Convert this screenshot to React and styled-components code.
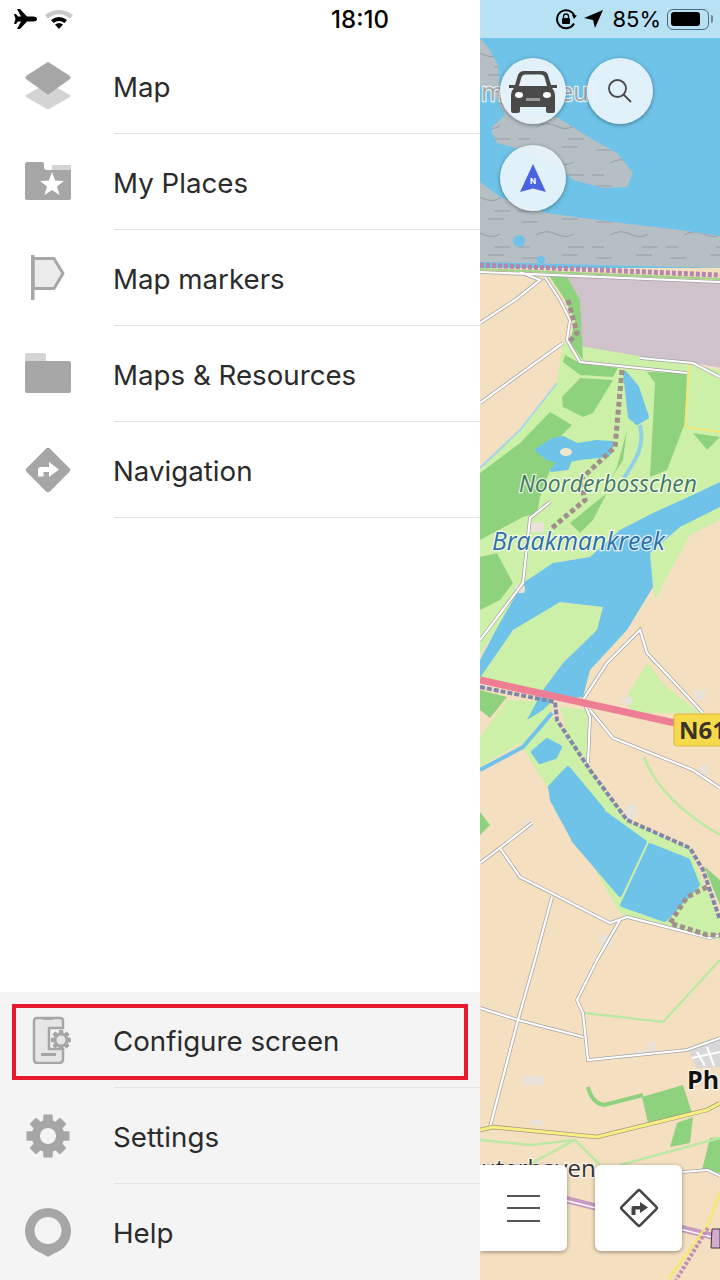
import React from 'react'
import styled, { createGlobalStyle } from 'styled-components'

const GlobalStyle = createGlobalStyle`
    html, body { margin: 0; padding: 0; background: #fff; }
    body { font-family: Inter, "Liberation Sans", sans-serif; }
`;

const GREY = '#a6a6a6'

function LayersIcon() {
    return (
        <svg width="46" height="48" viewBox="0 0 46 48">
            <path d="M23 21 L45 33 Q46 34 45 35 L24 47 Q23 47.5 22 47 L1 35 Q0 34 1 33 Z" fill="#d4d4d4" />
            <path d="M23 0 Q23.6 0 24 .4 L45 14 Q46 15.500 45 17 L24 32 Q23 32.500 22 32 L1 17 Q0 15.500 1 14 L22 .4 Q22.400 0 23 0 Z" fill={GREY} />
        </svg>
    )
}

function StarFolderIcon() {
    return (
        <svg width="46" height="40" viewBox="0 0 46 40">
            <path d="M27 3 H46 V10 H27 Z" fill="#d4d4d4" />
            <path d="M2 0 H17 Q19 0 19 2 V5 Q19 8 22 8 H46 V36 Q46 38 44 38 H2 Q0 38 0 36 V2 Q0 0 2 0 Z" fill={GREY} />
            <path d="M27 10 L30.200 18.500 L39 19 L32 24.500 L34.500 33 L27 28 L19.500 33 L22 24.500 L15 19 L23.800 18.500 Z" fill="#fff" />
        </svg>
    )
}

function FlagIcon() {
    return (
        <svg width="46" height="46" viewBox="0 0 46 46">
            <path d="M8 3.500 H29 L38 18.500 L29 33.500 H8 Z" fill="#ebebeb" stroke={GREY} strokeWidth="3" strokeLinejoin="round" />
            <rect x="6" y="0" width="3.500" height="45" fill={GREY} />
        </svg>
    )
}

function FolderIcon() {
    return (
        <svg width="46" height="42" viewBox="0 0 46 42">
            <path d="M2 0 H19 Q21 0 21 2 V12 H0 V2 Q0 0 2 0 Z" fill="#d4d4d4" />
            <path d="M2 8 H44 Q46 8 46 10 V38 Q46 40 44 40 H2 Q0 40 0 38 V10 Q0 8 2 8 Z" fill={GREY} />
        </svg>
    )
}

function TurnDiamondIcon() {
    return (
        <svg width="46" height="46" viewBox="0 0 46 46">
            <rect x="6.500" y="6.500" width="33" height="33" rx="3" transform="rotate(45 23 23)" fill={GREY} />
            <path d="M13 29.500 V23 Q13 20 16 20 H24 V15 L34 22.500 L24 30 V25 H18.500 V29.500 Z" fill="#fff" />
        </svg>
    )
}

function PhoneGearIcon() {
    return (
        <svg width="46" height="48" viewBox="0 0 46 48">
            <path d="M24 12 V33 H38 V43 Q38 47 34 47 H12 Q9 47 9 43 V5 Q9 2 12 2 H35 Q38 2 38 5 V12 Z" fill="#e6e6e6" stroke={GREY} strokeWidth="2.500" />
            <rect x="18" y="2" width="10" height="2" fill={GREY} />
            <rect x="16" y="37" width="15" height="3" fill={GREY} />
            <Gear cx={36} cy={24} r={10} hole={4.500} fill={GREY} holeFill="#e6e6e6" />
        </svg>
    )
}

function Gear({ cx, cy, r, hole, fill, holeFill }) {
    const teeth = [0, 45, 90, 135, 180, 225, 270, 315]
    const w = r * 0.44
    return (
        <g>
            <circle cx={cx} cy={cy} r={r * 0.76} fill={fill} />
            {teeth.map((a) => (
                <rect key={a} x={cx - w / 2} y={cy - r} width={w} height={r * 0.5} rx={r * 0.06}
                    transform={`rotate(${a} ${cx} ${cy})`} fill={fill} />
            ))}
            <circle cx={cx} cy={cy} r={hole} fill={holeFill} />
        </g>
    )
}

function GearIcon() {
    return (
        <svg width="46" height="46" viewBox="0 0 46 46">
            <Gear cx={23} cy={23} r={21.500} hole={8} fill={GREY} holeFill="#f4f4f4" />
        </svg>
    )
}

function PinIcon() {
    return (
        <svg width="46" height="52" viewBox="0 -2 46 52">
            <circle cx="23" cy="23" r="23" fill={GREY} />
            <path d="M13 43 L23 49 L33 43 Z" fill={GREY} />
            <circle cx="23" cy="22.500" r="13.500" fill="#f4f4f4" />
        </svg>
    )
}

const topItems = [
    { label: 'Map', icon: <LayersIcon /> },
    { label: 'My Places', icon: <StarFolderIcon /> },
    { label: 'Map markers', icon: <FlagIcon /> },
    { label: 'Maps & Resources', icon: <FolderIcon /> },
    { label: 'Navigation', icon: <TurnDiamondIcon /> },
]

const MARSH = 'M480 38 L490 50 L498 65 L500 90 L513 115 L557 117 L590 138 L617 153 L633 173 L627 187 L603 188 L573 180 L560 167 L523 150 L497 143 L492 133 L492 127 L505 115 L495 96 L480 86 Z M480 182 L500 197 L547 213 L613 222 L680 230 L720 236 L720 268 L480 262 Z'

const roads = [
    'M480 323 L515 300 L540 280 L520 272',
    'M480 403 L563 343',
    'M545 277 L560 300 L570 320 L567 340 L580 362 L687 373',
    'M640 358 L693 363 L720 377',
    'M550 502 L530 518 L523 583 L490 627 L480 640',
    'M583 700 L590 717 L588 763',
    'M583 700 L607 663 L627 643 L640 630 L647 653 L703 713',
    'M590 710 L613 738 L693 770 L720 788',
    'M532 823 L500 848 L480 863',
    'M500 848 L520 877 L610 923 L627 917 L710 938 L720 935',
    'M552 897 L535 960 L518 1020 L490 1127',
    'M480 1008 L518 1020 L583 1037',
    'M620 920 L597 960 L577 1000 L583 1013 L588 1060 L687 1050 L720 1038',
    'M682 1172 L708 1170 L720 1176',
    'M480 272 L720 282',
]

const forest = [
    '480,473 520,443 550,412 572,425 560,437 537,450 557,463 550,470 540,497 537,513 523,517 480,540',
    '562,397 580,378 613,380 593,413 583,417 563,407',
    '647,372 687,373 685,423 667,470 650,477 655,383',
    '565,355 580,363 618,368 613,377 580,375 563,362',
    '550,277 567,277 580,300 583,360 570,343 575,320 565,300',
    '570,523 607,493 593,520 580,533',
    '617,467 627,430 623,460 610,480',
    '480,557 497,553 513,583 500,600 480,610',
    '693,433 720,437 707,450',
    '480,690 507,697 490,718 480,710',
    '642,1097 683,1085 692,1113 648,1123',
    '677,1123 693,1117 690,1143 670,1147',
    '710,1138 720,1137 720,1173 702,1170',
    '704,866 720,880 720,905',
    '480,812 490,825 480,835',
]

const meadow = [
    '563,343 720,370 720,482 697,493 653,513 620,530 590,557 553,563 523,583 497,628 480,655 480,470 520,430 556,385',
    '513,630 560,602 603,607 597,630 563,663 543,690 480,680 480,660',
    '480,737 507,700 550,702 552,713 520,743 480,767',
    '560,707 587,710 588,760 570,743',
    '520,743 553,717 590,770 627,820 690,848 703,883 720,920 720,940 670,926 620,913 547,787',
    '623,703 647,663 667,687 700,713 637,713',
    '653,587 650,553 680,527 720,507 720,520 690,535 667,577 655,600',
]

const reservoirs = [
    '568,768 603,810 572,837 552,800 550,787',
    '605,813 645,842 620,895 573,840',
    '650,845 688,860 698,885 665,920 622,905',
    '533,752 547,740 560,747 555,757 540,762',
    '537,450 553,440 563,438 577,445 597,442 612,443 608,455 580,458 570,460 567,468 552,470 560,462 547,458',
    '625,373 637,387 647,417 637,423 630,417',
]

const farmyards = [
    [522, 1076, 22, 9], [636, 1050, 14, 6], [648, 1042, 8, 10], [530, 1120, 14, 5],
    [622, 697, 10, 8], [694, 690, 12, 10], [625, 805, 12, 14], [525, 820, 8, 10],
    [600, 935, 12, 12], [700, 765, 8, 10], [530, 522, 14, 10], [515, 585, 10, 8],
]

function MapDrawing() {
    return (
        <MapSvg viewBox="480 0 240 1280" width="240" height="1280">
            <defs>
                <pattern id="marsh" width="74" height="36" patternUnits="userSpaceOnUse">
                    <path d="M4 6 H20 M44 3 H60 M18 19 Q28 13 38 18 T56 18 M0 31 H12 M50 31 H66" stroke="#939ea3" strokeWidth="1" fill="none" />
                </pattern>
            </defs>

            <rect x="480" y="0" width="240" height="1280" fill="#f5dfc1" />
            {/* water and marsh at the top */}
            <rect x="480" y="0" width="240" height="268" fill="#6fc3e8" />
            <path d={MARSH} fill="#b5bfc4" />
            <path d={MARSH} fill="url(#marsh)" />
            <circle cx="519" cy="241" r="6" fill="#6fc3e8" />
            <circle cx="541" cy="260" r="4" fill="#6fc3e8" />

            {/* industry */}
            <path d="M567 277 L720 281 V368 L690 362 L583 360 L580 320 Z" fill="#cfc2cb" />
            <path d="M688 387 L720 390 V432 L685 427 Z" fill="#cfc2cb" />

            {meadow.map((p) => <polygon key={p} points={p} fill="#cdf0a9" />)}
            {forest.map((p) => <polygon key={p} points={p} fill="#8fd27e" />)}
            <path d="M690 363 L685 427 L720 432" fill="none" stroke="#f3e77b" strokeWidth="2" />

            {/* river */}
            <path d="M720 482 L697 493 L653 513 L620 530 L590 557 L553 563 L523 583 L497 628 L480 660 V678 L513 630 L560 602 L603 607 L597 630 L563 663 L543 690 L527 720 L543 710 L553 700 L583 697 L590 670 L627 630 L653 587 L650 553 L680 527 L720 507 Z" fill="#6fc3e8" />
            <path d="M552 713 L523 747 L480 770" fill="none" stroke="#6fc3e8" strokeWidth="4" />
            <path d="M640 425 Q645 445 632 465 L624 478" fill="none" stroke="#8fd0e8" strokeWidth="4" />
            <path d="M557 383 L520 430 L480 468" fill="none" stroke="#a9d6e4" strokeWidth="2" />
            {reservoirs.map((p) => (
                <polygon key={p} points={p} fill="#6fc3e8" stroke="#6fc3e8" strokeWidth="4" strokeLinejoin="round" />
            ))}
            <ellipse cx="566" cy="452" rx="6" ry="4" fill="#f0e6cf" />
            {farmyards.map(([x, y, w, h]) => (
                <rect key={`${x}-${y}`} x={x} y={y} width={w} height={h} rx="3" fill="#e9e2d8" />
            ))}

            {/* thin green lines */}
            <path d="M585 1013 L663 1022 L720 960 M480 1140 L530 1145 L575 1140 M500 1180 L575 1140 L600 1165 M620 1165 L720 1138 M644 757 Q660 800 720 835" fill="none" stroke="#bbe8a3" strokeWidth="2.500" />
            <path d="M588 1087 Q592 1103 604 1105 L643 1095" fill="none" stroke="#8fd27e" strokeWidth="4" />

            <path d="M688 1050 L720 1037 V1067 L697 1068 Z" fill="#d8d8d8" />
            <path d="M697 1052 L705 1066 M707 1047 L714 1066 M692 1058 L720 1052" stroke="#fff" strokeWidth="2" fill="none" />

            {roads.map((d) => <path key={d} d={d} fill="none" stroke="#a3a3a3" strokeWidth="3.600" />)}
            {roads.map((d) => <path key={d + 'w'} d={d} fill="none" stroke="#fff" strokeWidth="2.200" />)}

            {/* rails */}
            <path d="M480 265 L720 275" fill="none" stroke="#b486ab" strokeWidth="5" strokeDasharray="4 2" />
            <path d="M480 269 L720 279" fill="none" stroke="#9fd483" strokeWidth="2" />
            <path d="M568 300 L577 333 L568 343 M622 370 L615 447 L580 480 L585 500 L552 528 M707 887 L687 897 L670 923 L707 935 L720 935" fill="none" stroke="#a0908c" strokeWidth="5" strokeDasharray="5 3" />
            <path d="M480 687 L555 702 L557 720 L590 770 L627 820 L690 848 L703 870 L720 920" fill="none" stroke="#7f88a8" strokeWidth="4" strokeDasharray="5 2" />

            {/* main roads */}
            <path d="M480 680 L675 723" fill="none" stroke="#ee7e93" strokeWidth="7" />
            <path d="M480 1130 L493 1127 L597 1137 L707 1110 L720 1103" fill="none" stroke="#a39a7c" strokeWidth="4.500" />
            <path d="M480 1130 L493 1127 L597 1137 L707 1110 L720 1103" fill="none" stroke="#f7ef82" strokeWidth="3" />
            <path d="M560 1198 L720 1238" fill="none" stroke="#c79ac0" strokeWidth="7" />
            <path d="M560 1199 L720 1239" fill="none" stroke="#fff" strokeWidth="1.500" />
            <path d="M720 1192 L708 1225 L668 1280" fill="none" stroke="#f1e97b" strokeWidth="3" />
            <path d="M708 1228 L676 1280" fill="none" stroke="#c48db8" strokeWidth="4" strokeDasharray="3 2" />
            <path d="M712 1229 H720 V1248 H711 Z" fill="#d5a9d0" stroke="#3a3a3a" strokeWidth="1" />

            {/* place names */}
            <MapLabel x="519" y="492" fontSize="22.800" fontStyle="italic" fill="#3f7a5c">Noorderbosschen</MapLabel>
            <MapLabel x="492" y="550" fontSize="24.700" fontStyle="italic" fill="#2f6ea8">Braakmankreek</MapLabel>
            <MapLabel x="481" y="101" fontSize="25" fill="#a2a8ac">mazeheul</MapLabel>
            <MapLabel x="687" y="1089" fontSize="25" fontWeight="700" fill="#111">Ph</MapLabel>
            <MapLabel x="481" y="1177" fontSize="24" fill="#333">uterhaven</MapLabel>

            <rect x="674" y="714" width="60" height="32" rx="3" fill="#f7d94c" stroke="#d9b93a" strokeWidth="1" />
            <ShieldText x="679" y="739" fontSize="24" fontWeight="700" fill="#3a3428">N61</ShieldText>
        </MapSvg>
    )
}

function App() {
    return (
        <>
            <GlobalStyle />
            <Screen>
                <StatusBar>
                    <StatusLeft>
                        <svg width="24" height="22" viewBox="0 0 24 22">
                            <path d="M3 1 L6 1 L13 8.500 H19 Q23 8.500 23 11 Q23 13.500 19 13.500 H13 L6 21 H3 L7 13.500 H4 L2 16 H0 L1.500 11 L0 6 H2 L4 8.500 H7 Z" fill="#000" />
                        </svg>
                        <svg width="30" height="22" viewBox="0 0 30 22">
                            <path d="M1 7 Q15 -3 29 7 L26 10.500 Q15 2 4 10.500 Z" fill="#c9c9c9" />
                            <path d="M7 12 Q15 6 23 12 L20.500 15 Q15 11 9.500 15 Z" fill="#000" />
                            <path d="M11 16.500 Q15 13.500 19 16.500 L15 21 Z" fill="#000" />
                        </svg>
                    </StatusLeft>
                    <Clock>18:10</Clock>
                    <StatusRight>
                        <svg width="22" height="22" viewBox="0 0 22 22">
                            <path d="M19.500 8 A9 9 0 1 0 19 15.500" fill="none" stroke="#000" strokeWidth="2" />
                            <path d="M17 7 L22 7.500 L19 11 Z" fill="#000" />
                            <rect x="7" y="10" width="8" height="6" rx="1" fill="#000" />
                            <path d="M8.500 10 V8.500 A2.500 2.500 0 0 1 13.500 8.500 V10" fill="none" stroke="#000" strokeWidth="1.300" />
                        </svg>
                        <svg width="20" height="20" viewBox="0 0 20 20">
                            <path d="M19 1 L11 19 L9 11 L0 9 Z" fill="#000" />
                        </svg>
                        <Percent>85%</Percent>
                        <Battery>
                            <BatteryFill />
                            <BatteryNub />
                        </Battery>
                    </StatusRight>
                </StatusBar>

                <Drawer>
                    <MenuList>
                        {topItems.map((item) => (
                            <MenuRow key={item.label}>
                                <IconSlot>{item.icon}</IconSlot>
                                <RowLabel $lined>{item.label}</RowLabel>
                            </MenuRow>
                        ))}
                    </MenuList>
                    <FooterList>
                        <MenuRow>
                            <Highlight />
                            <IconSlot><PhoneGearIcon /></IconSlot>
                            <RowLabel $lined>Configure screen</RowLabel>
                        </MenuRow>
                        <MenuRow>
                            <IconSlot><GearIcon /></IconSlot>
                            <RowLabel $lined>Settings</RowLabel>
                        </MenuRow>
                        <MenuRow>
                            <IconSlot><PinIcon /></IconSlot>
                            <RowLabel>Help</RowLabel>
                        </MenuRow>
                    </FooterList>
                </Drawer>

                <MapPane>
                    <MapDrawing />
                    <MapControls>
                        <RoundButton>
                            <svg width="52" height="44" viewBox="0 0 52 44">
                                <path d="M8 16 L11 6 Q12.500 2 17 2 H35 Q39.500 2 41 6 L44 16 H50 V19 H45 Q48 22 48 26 V42 Q48 44 46 44 H41 Q39 44 39 42 V38 H13 V42 Q13 44 11 44 H6 Q4 44 4 42 V26 Q4 22 7 19 H2 V16 Z" fill="#4a4a4a" />
                                <path d="M12 17 L14.500 8 Q15.500 5.500 18 5.500 H34 Q36.500 5.500 37.500 8 L40 17 Z" fill="#e6f2f8" />
                                <ellipse cx="12" cy="26" rx="4" ry="3" fill="#fff" />
                                <ellipse cx="40" cy="26" rx="4" ry="3" fill="#fff" />
                                <rect x="19" y="29" width="14" height="3" fill="#999" />
                            </svg>
                        </RoundButton>
                        <RoundButton>
                            <svg width="26" height="26" viewBox="0 0 26 26">
                                <circle cx="10.500" cy="10.500" r="8.500" fill="none" stroke="#4a4a4a" strokeWidth="1.800" />
                                <path d="M16.500 16.500 L24 24" stroke="#4a4a4a" strokeWidth="1.800" />
                            </svg>
                        </RoundButton>
                        <RoundButton>
                            <svg width="26" height="28" viewBox="0 0 26 28">
                                <path d="M13 0 L26 28 L13 24.500 L0 28 Z" fill="#4a63e0" />
                                <text x="13" y="20" textAnchor="middle" fontSize="8" fontWeight="700" fill="#fff" fontFamily="Inter, sans-serif">N</text>
                            </svg>
                        </RoundButton>
                    </MapControls>
                    <MapActions>
                        <MenuButton>
                            <HamburgerLine />
                            <HamburgerLine />
                            <HamburgerLine />
                        </MenuButton>
                        <SquareButton>
                            <svg width="40" height="40" viewBox="0 0 40 40">
                                <rect x="7" y="7" width="26" height="26" rx="1.500" transform="rotate(45 20 20)" fill="none" stroke="#444" strokeWidth="2.500" />
                                <path d="M12.500 27 V20 Q12.500 18 14.500 18 H21 V14 L29 19.500 L21 25 V21.500 H16.500 V27 Z" fill="#444" />
                            </svg>
                        </SquareButton>
                    </MapActions>
                </MapPane>
            </Screen>
        </>
    )
}

const Screen = styled.div`
    position: relative;
    display: flex;
    width: 720px;
    height: 1280px;
    overflow: hidden;
`;

const StatusBar = styled.div`
    position: absolute;
    top: 0;
    left: 0;
    z-index: 3;
    display: grid;
    grid-template-columns: 1fr auto 1fr;
    align-items: center;
    width: 720px;
    height: 38px;
    color: #000;
`;

const StatusLeft = styled.div`
    display: flex;
    align-items: center;
    gap: 6px;
    padding-left: 14px;
`;

const Clock = styled.div`
    font-size: 24px;
    font-weight: 500;
`;

const StatusRight = styled.div`
    display: flex;
    align-items: center;
    justify-content: flex-end;
    gap: 7px;
    height: 38px;
    padding-right: 11px;
    margin-left: 91px;
    background: #b9e1f4;
`;

const Percent = styled.span`
    font-size: 22px;
    font-weight: 400;
    margin-left: 1px;
    margin-right: -1px;
`;

const Battery = styled.div`
    position: relative;
    box-sizing: border-box;
    width: 42px;
    height: 21px;
    padding: 2.5px;
    border: 1.5px solid #4d6b7a;
    border-radius: 6px;
`;

const BatteryFill = styled.div`
    width: 85%;
    height: 100%;
    background: #000;
    border-radius: 3px;
`;

const BatteryNub = styled.div`
    position: absolute;
    top: 5px;
    right: -5px;
    width: 2px;
    height: 8px;
    background: #6c8794;
    border-radius: 0 2px 2px 0;
`;

const Drawer = styled.div`
    display: flex;
    flex-direction: column;
    justify-content: space-between;
    flex: none;
    width: 480px;
    height: 1280px;
    padding-top: 38px;
    box-sizing: border-box;
    background: #fff;
    position: relative;
    z-index: 2;
`;

const MenuList = styled.div`
    display: flex;
    flex-direction: column;
`;

const FooterList = styled(MenuList)`
    background: #f4f4f4;
`;

const MenuRow = styled.div`
    position: relative;
    display: flex;
    height: 96px;
    padding-left: 25px;
`;

const IconSlot = styled.div`
    display: flex;
    align-items: center;
    justify-content: center;
    flex: none;
    width: 46px;
    margin-right: 43px;
`;

const RowLabel = styled.div`
    display: flex;
    align-items: center;
    flex: 1;
    padding-top: 2px;
    text-indent: -1px;
    font-size: 27.7px;
    color: #2b2b2b;
    border-bottom: ${(p) => (p.$lined ? '1px solid #e2e2e2' : 'none')};
`;

const Highlight = styled.div`
    position: absolute;
    left: 12px;
    top: 12px;
    width: 456px;
    height: 76px;
    box-sizing: border-box;
    border: 4px solid #e8192c;
`;

const MapPane = styled.div`
    position: relative;
    flex: 1;
    overflow: hidden;
`;

const MapSvg = styled.svg`
    display: block;
`;

const MapLabel = styled.text`
    font-family: "Open Sans", "Noto Sans", sans-serif;
    paint-order: stroke;
    stroke: rgba(255, 255, 255, 0.75);
    stroke-width: 2.5px;
`;

const ShieldText = styled.text`
    font-family: "Open Sans", "Noto Sans", sans-serif;
`;

const MapControls = styled.div`
    position: absolute;
    top: 58px;
    left: 20px;
    display: grid;
    grid-template-columns: 66px 66px;
    gap: 21px;
`;

const RoundButton = styled.div`
    display: flex;
    align-items: center;
    justify-content: center;
    width: 66px;
    height: 66px;
    border-radius: 50%;
    background: rgba(232, 244, 251, 0.93);
    box-shadow: 0 1px 4px rgba(0, 0, 0, 0.4);
`;

const MapActions = styled.div`
    position: absolute;
    left: 0;
    bottom: 29px;
    display: flex;
    gap: 28px;
`;

const SquareButton = styled.div`
    display: flex;
    align-items: center;
    justify-content: center;
    width: 87px;
    height: 86px;
    background: #fff;
    border-radius: 6px;
    box-shadow: 0 1px 4px rgba(0, 0, 0, 0.4);
`;

const MenuButton = styled(SquareButton)`
    flex-direction: column;
    gap: 10.5px;
    border-radius: 0 6px 6px 0;
`;

const HamburgerLine = styled.span`
    display: block;
    width: 33px;
    height: 2px;
    background: #555;
`;

export default App
